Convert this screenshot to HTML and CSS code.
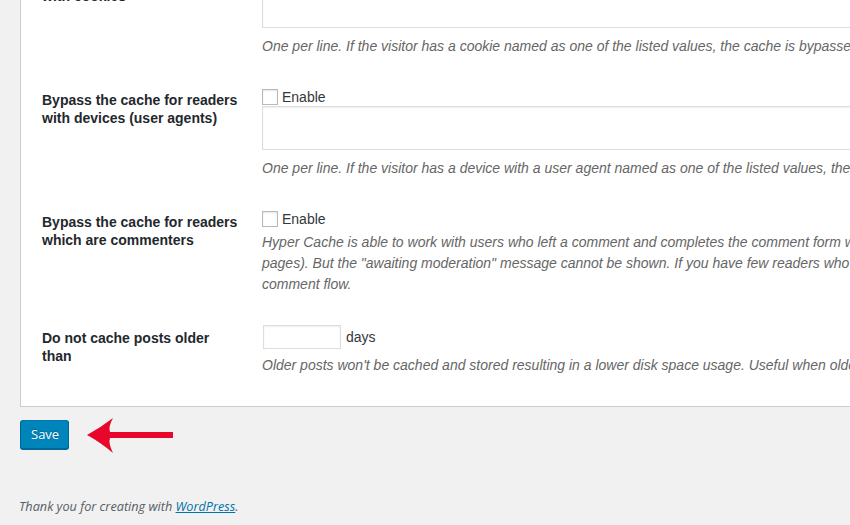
FILE: index.html
```html
<!DOCTYPE html>
<html lang="en">
<head>
    <meta charset="UTF-8">
    <meta name="viewport" content="width=device-width, initial-scale=1.0">
    <title>Hyper Cache Settings</title>
    <link rel="stylesheet" href="styles.css">
</head>
<body>
    <div class="wrap">
        <div class="panel">
            <table class="form-table">
                <tr>
                    <th>Bypass the cache for readers with cookies</th>
                    <td>
                        <label class="check"><input type="checkbox"> Enable</label>
                        <textarea class="large-text"></textarea>
                        <p class="description">One per line. If the visitor has a cookie named as one of the listed values, the cache is bypassed.</p>
                    </td>
                </tr>
                <tr>
                    <th>Bypass the cache for readers with devices (user agents)</th>
                    <td>
                        <label class="check"><input type="checkbox"> Enable</label>
                        <textarea class="large-text"></textarea>
                        <p class="description">One per line. If the visitor has a device with a user agent named as one of the listed values, the cache is bypassed.</p>
                    </td>
                </tr>
                <tr>
                    <th>Bypass the cache for readers which are commenters</th>
                    <td>
                        <label class="check"><input type="checkbox"> Enable</label>
                        <p class="description">Hyper Cache is able to work with users who left a comment and completes the comment form with user data even on cached page (with a small JavaScript added at the end of the<br>
                        pages). But the "awaiting moderation" message cannot be shown. If you have few readers who comment you can disable this feature to get back the classical WordPress<br>
                        comment flow.</p>
                    </td>
                </tr>
                <tr>
                    <th>Do not cache posts older than</th>
                    <td>
                        <div class="days-field"><input type="text" class="small-text"> days</div>
                        <p class="description">Older posts won't be cached and stored resulting in a lower disk space usage. Useful when older posts have low traffic.</p>
                    </td>
                </tr>
            </table>
        </div>

        <div class="submit">
            <button class="button-primary">Save</button>
            <!-- red pointer added on the screenshot -->
            <svg class="pointer" width="90" height="38" viewBox="0 0 90 38">
                <path d="M2 20 Q15 13 28 3 Q23 12 25 17 L88 17 L88 23 L25 23 Q23 28 28 38 Q15 27 2 20 Z" fill="#e8072a"/>
            </svg>
        </div>
    </div>

    <footer>
        Thank you for creating with <a href="#">WordPress</a>.
    </footer>
</body>
</html>
```

FILE: styles.css
```css
html, body {
    overflow: hidden;
}

body {
    margin: 0;
    background-color: #f1f1f1;
    font-family: "Liberation Sans", Arial, sans-serif;
    font-size: 14px;
    color: #444;
}

.wrap {
    margin-top: -62px;
    padding-left: 20px;
}

.panel {
    width: 1560px;
    padding: 10px 20px 16px 21px;
    background-color: #fff;
    border: 1px solid #ccc;
}

.form-table {
    width: 100%;
    border-collapse: collapse;
    border-spacing: 0;
}

.form-table th {
    width: 200px;
    padding: 20px 20px 20px 0;
    vertical-align: top;
    text-align: left;
    font-size: 14px;
    font-weight: bold;
    line-height: 1.3;
    color: #23282d;
}

.form-table td {
    padding: 15px 0 14px;
    vertical-align: top;
    line-height: 1.3;
}

.check {
    display: flex;
    align-items: center;
    height: 20px;
    padding-top: 1px;
    margin-bottom: -1px;
    color: #32373c;
}

.check input {
    appearance: none;
    -webkit-appearance: none;
    width: 16px;
    height: 16px;
    margin: -1px 4px 0 0;
    background-color: #fff;
    border: 1px solid #b4b9be;
    box-shadow: inset 0 1px 2px rgba(0, 0, 0, 0.1);
    box-sizing: border-box;
}

.large-text {
    display: block;
    width: 99%;
    height: 44px;
    margin: 0;
    border: 1px solid #ddd;
    box-shadow: inset 0 1px 2px rgba(0, 0, 0, 0.07);
    box-sizing: border-box;
    resize: none;
}

.description {
    margin: 8px 0 0;
    font-style: italic;
    line-height: 21px;
    color: #666;
}

.check + .description {
    margin-top: 4px;
}

.days-field + .description {
    margin-top: 5px;
}

.days-field {
    display: flex;
    align-items: center;
    gap: 5px;
    height: 26px;
    color: #32373c;
}

.small-text {
    width: 78px;
    height: 24px;
    margin: 0 0 0 1px;
    border: 1px solid #ddd;
    box-shadow: inset 0 1px 2px rgba(0, 0, 0, 0.07);
    box-sizing: border-box;
}

.submit {
    display: flex;
    align-items: center;
    margin-top: 8px;
}

.button-primary {
    height: 29px;
    padding: 0 9px 0 10px;
    font-family: "Open Sans", sans-serif;
    font-size: 13px;
    color: #fff;
    background-color: #0085ba;
    border: 1px solid #0073aa;
    border-color: #0073aa #006799 #006799;
    border-radius: 3px;
    box-shadow: 0 1px 0 #006799;
    text-shadow: 0 -1px 1px #006799;
    cursor: pointer;
}

.pointer {
    margin-left: 16px;
    overflow: visible;
}

footer {
    margin-top: 44px;
    padding: 0 19px;
    font-family: "Open Sans", sans-serif;
    font-size: 12.7px;
    font-style: italic;
    line-height: 18px;
    color: #555d66;
}

footer a {
    color: #0073aa;
}
```
